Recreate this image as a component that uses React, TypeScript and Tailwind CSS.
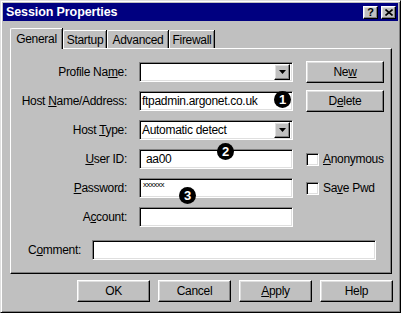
import React from 'react';

const font = "font-['Liberation_Sans',Arial,sans-serif]";

const raised =
  'border border-t-white border-l-white border-b-black border-r-black shadow-[inset_-1px_-1px_0_#808080,inset_1px_1px_0_#dfdfdf] bg-[#c0c0c0]';
const sunken =
  'border border-t-[#808080] border-l-[#808080] border-b-white border-r-white shadow-[inset_1px_1px_0_#000,inset_-1px_-1px_0_#dfdfdf] bg-white';
const txt = 'text-[12px] tracking-[-0.3px] whitespace-nowrap';

const U = ({ children }: { children: React.ReactNode }) => <span className="underline underline-offset-[1px]">{children}</span>;

const Arrow = () => (
  <div className={`${raised} w-[16px] h-[16px] flex items-center justify-center`}>
    <svg width="7" height="4" viewBox="0 0 7 4">
      <polygon points="0,0 7,0 3.5,4" fill="#000" />
    </svg>
  </div>
);

const Button = ({ children, w = 'w-[73px]' }: { children: React.ReactNode; w?: string }) => (
  <div className={`${raised} ${w} h-[22px] flex items-center justify-center ${txt}`}>{children}</div>
);

const Check = ({ children }: { children: React.ReactNode }) => (
  <div className={`flex items-center gap-[4px] ${txt}`}>
    <div className={`${sunken} w-[13px] h-[13px]`} />
    <span>{children}</span>
  </div>
);

const Row = ({
  label,
  children,
  right,
}: {
  label: React.ReactNode;
  children: React.ReactNode;
  right?: React.ReactNode;
}) => (
  <div className="flex items-center h-[20px]">
    <div className={`w-[116px] text-right leading-none ${txt}`}>{label}</div>
    <div className="ml-[12px] w-[154px] h-[20px]">{children}</div>
    <div className="ml-[13px]">{right}</div>
  </div>
);

const Tab = ({ children, w }: { children: React.ReactNode; w: string }) => (
  <div
    className={`${w} h-[18px] ml-[1px] border-t border-l border-t-white border-l-white rounded-tl-[2px] shadow-[1px_0_0_#000,inset_-1px_0_0_#808080] flex items-center justify-center ${txt}`}
  >
    {children}
  </div>
);

const Badge = ({ n, className }: { n: string; className: string }) => (
  <div
    className={`absolute w-[17px] h-[17px] rounded-full bg-black text-white text-[13px] font-bold flex items-center justify-center leading-none ${className}`}
  >
    {n}
  </div>
);

export default function App() {
  return (
    <div
      className={`relative w-[401px] h-[313px] bg-[#c0c0c0] p-[2px] text-black ${font} border border-t-[#dfdfdf] border-l-[#dfdfdf] border-b-black border-r-black shadow-[inset_1px_1px_0_#fff,inset_-1px_-1px_0_#808080]`}
    >
      {/* title bar */}
      <div className="h-[18px] bg-[#000080] flex items-center pl-[3px] pr-[2px]">
        <span className="text-white font-bold text-[12.5px] tracking-[-0.1px] whitespace-nowrap">Session Properties</span>
        <div className="ml-auto flex gap-[3px]">
          <div className={`${raised} w-[15px] h-[13px] flex items-center justify-center text-[11px] font-bold leading-none`}>
            ?
          </div>
          <div className={`${raised} w-[15px] h-[13px] flex items-center justify-center`}>
            <svg width="8" height="7" viewBox="0 0 8 7">
              <path d="M0.5 0.5 L7.5 6.5 M7.5 0.5 L0.5 6.5" stroke="#000" strokeWidth="1.6" />
            </svg>
          </div>
        </div>
      </div>

      <div className="pl-[7px] pr-[6px]">
        {/* tabs */}
        <div className="flex items-end h-[20px] mt-[7px] relative z-10">
          <div
            className={`w-[52px] h-[21px] -mb-[1px] bg-[#c0c0c0] border-t border-l border-t-white border-l-white rounded-tl-[2px] shadow-[1px_0_0_#000,inset_-1px_0_0_#808080] flex items-center justify-center ${txt}`}
          >
            General
          </div>
          <Tab w="w-[43px]">Startup</Tab>
          <Tab w="w-[61px]">Advanced</Tab>
          <Tab w="w-[45px]">Firewall</Tab>
        </div>

        {/* panel */}
        <div className="h-[226px] border border-t-white border-l-white border-b-black border-r-black shadow-[inset_-1px_-1px_0_#808080] pt-[13px] flex flex-col gap-[9px]">
          <Row label={<>Profile Na<U>m</U>e:</>} right={<Button w="w-[78px]">Ne<U>w</U></Button>}>
            <div className={`${sunken} h-full flex items-center justify-end pr-[2px]`}>
              <Arrow />
            </div>
          </Row>
          <Row label={<>Host <U>N</U>ame/Address:</>} right={<Button w="w-[78px]">D<U>e</U>lete</Button>}>
            <div className={`${sunken} h-full flex items-center pl-[2px] ${txt}`}>ftpadmin.argonet.co.uk</div>
          </Row>
          <Row label={<>Host <U>T</U>ype:</>}>
            <div className={`${sunken} h-full flex items-center justify-between pl-[2px] pr-[2px] ${txt}`}>
              <span>Automatic detect</span>
              <Arrow />
            </div>
          </Row>
          <Row label={<><U>U</U>ser ID:</>} right={<Check><U>A</U>nonymous</Check>}>
            <div className={`${sunken} h-full flex items-center pl-[6px] ${txt}`}>aa00</div>
          </Row>
          <Row label={<><U>P</U>assword:</>} right={<Check>Sa<U>v</U>e Pwd</Check>}>
            <div className={`${sunken} h-full pl-[3px] pt-[1px] text-[8px] leading-[10px] tracking-[-0.5px]`}>xxxxxx</div>
          </Row>
          <Row label={<>A<U>c</U>count:</>}>
            <div className={`${sunken} h-full`} />
          </Row>
          <div className="flex items-center h-[20px] mt-[4px]">
            <div className={`w-[70px] text-right leading-none ${txt}`}>
              C<U>o</U>mment:
            </div>
            <div className={`${sunken} ml-[11px] w-[284px] h-[20px]`} />
          </div>
        </div>
      </div>

      {/* bottom buttons */}
      <div className="flex justify-end gap-[8px] pr-[5px] mt-[6px]">
        <Button>OK</Button>
        <Button>Cancel</Button>
        <Button>
          <U>A</U>pply
        </Button>
        <Button>Help</Button>
      </div>

      <Badge n="1" className="left-[273px] top-[90px]" />
      <Badge n="2" className="left-[216px] top-[142px]" />
      <Badge n="3" className="left-[178px] top-[186px]" />
    </div>
  );
}
